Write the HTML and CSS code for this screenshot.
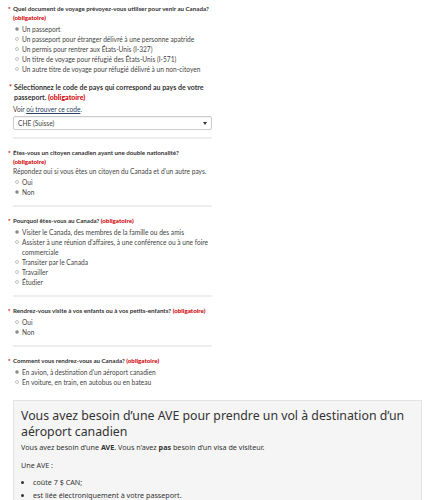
FILE: index.html
```html
<!DOCTYPE html>
<html lang="fr">

<head>
    <meta charset="UTF-8">
    <meta name="viewport" content="width=device-width, initial-scale=1.0">
    <title>Découvrez si vous avez besoin d'un visa</title>
    <link rel="stylesheet" href="styles.css">
</head>

<body>
    <div class="page">
        <form class="wizard">
            <div class="question">
                <p class="label"><span class="req">*</span>Quel document de voyage prévoyez-vous utiliser pour venir au Canada? <strong class="oblig">(obligatoire)</strong></p>
                <ul class="options">
                    <li><span class="radio checked"></span>Un passeport</li>
                    <li><span class="radio"></span>Un passeport pour étranger délivré à une personne apatride</li>
                    <li><span class="radio"></span>Un permis pour rentrer aux États-Unis (I-327)</li>
                    <li><span class="radio"></span>Un titre de voyage pour réfugié des États-Unis (I-571)</li>
                    <li><span class="radio"></span>Un autre titre de voyage pour réfugié délivré à un non-citoyen</li>
                </ul>
            </div>

            <div class="question question-next">
                <p class="label label-big"><span class="req">*</span>Sélectionnez le code de pays qui correspond au pays de votre passeport. <strong class="oblig">(obligatoire)</strong></p>
                <p class="hint">Voir <a href="#">où trouver ce code</a>.</p>
                <div class="select">
                    <span>CHE (Suisse)</span>
                    <span class="caret"></span>
                </div>
            </div>

            <hr class="sep sep-first">

            <div class="question">
                <p class="label"><span class="req">*</span>Êtes-vous un citoyen canadien ayant une double nationalité? <strong class="oblig">(obligatoire)</strong></p>
                <p class="hint">Répondez oui si vous êtes un citoyen du Canada et d'un autre pays.</p>
                <ul class="options">
                    <li><span class="radio"></span>Oui</li>
                    <li><span class="radio checked"></span>Non</li>
                </ul>
            </div>

            <hr class="sep">

            <div class="question">
                <p class="label"><span class="req">*</span>Pourquoi êtes-vous au Canada? <strong class="oblig">(obligatoire)</strong></p>
                <ul class="options">
                    <li><span class="radio checked"></span>Visiter le Canada, des membres de la famille ou des amis</li>
                    <li><span class="radio"></span>Assister à une réunion d'affaires, à une conférence ou à une foire commerciale</li>
                    <li><span class="radio"></span>Transiter par le Canada</li>
                    <li><span class="radio"></span>Travailler</li>
                    <li><span class="radio"></span>Étudier</li>
                </ul>
            </div>

            <hr class="sep">

            <div class="question">
                <p class="label"><span class="req">*</span>Rendrez-vous visite à vos enfants ou à vos petits-enfants? <strong class="oblig">(obligatoire)</strong></p>
                <ul class="options">
                    <li><span class="radio"></span>Oui</li>
                    <li><span class="radio checked"></span>Non</li>
                </ul>
            </div>

            <hr class="sep">

            <div class="question">
                <p class="label"><span class="req">*</span>Comment vous rendrez-vous au Canada? <strong class="oblig">(obligatoire)</strong></p>
                <ul class="options">
                    <li><span class="radio checked"></span>En avion, à destination d'un aéroport canadien</li>
                    <li><span class="radio"></span>En voiture, en train, en autobus ou en bateau</li>
                </ul>
            </div>
        </form>

        <section class="result">
            <h2>Vous avez besoin d’une AVE pour prendre un vol à destination d’un aéroport canadien</h2>
            <p>Vous avez besoin d’une <strong>AVE</strong>. Vous n’avez <strong>pas</strong> besoin d’un visa de visiteur.</p>
            <p>Une AVE :</p>
            <ul>
                <li>coûte 7 $ CAN;</li>
                <li>est liée électroniquement à votre passeport.</li>
            </ul>
        </section>
    </div>
</body>

</html>
```

FILE: styles.css
```css
* {
    margin: 0;
    padding: 0;
    box-sizing: border-box;
}

body {
    font-family: Lato, 'Liberation Sans', sans-serif;
    color: #333;
    background: #fff;
}

.page {
    padding: 4px 13px 0;
}

/* Wizard form */
.wizard {
    width: 199px;
}

.question-next {
    margin-top: 8px;
}

.label {
    position: relative;
    font-size: 6.2px;
    line-height: 9px;
    font-weight: bold;
}

.label .req {
    position: absolute;
    left: -5px;
    color: #d3080c;
}

.oblig {
    color: #d3080c;
}

.label-big {
    font-size: 7px;
    line-height: 10px;
    margin: 0 0 2px 1px;
}

.hint {
    font-size: 6.6px;
    line-height: 10px;
    color: #444;
}

.hint a {
    color: #284162;
}

.options {
    list-style: none;
    margin-top: 2px;
}

.hint + .options {
    margin-top: 1px;
}

.options li {
    display: flex;
    font-size: 6.6px;
    line-height: 10px;
    padding-left: 2px;
    color: #444;
}

.radio {
    flex: none;
    width: 4px;
    height: 4px;
    margin: 3px 3px 0 0;
    border: 1px solid #c4c4c4;
    border-radius: 50%;
}

.radio.checked {
    background: #777;
    border-color: #b4b4b4;
}

.select {
    display: flex;
    justify-content: space-between;
    align-items: center;
    height: 14px;
    margin-top: 2px;
    padding: 0 4px;
    border: 1px solid #ccc;
    border-radius: 2px;
    font-size: 6.6px;
    color: #444;
    box-shadow: inset 0 1px 1px rgba(0, 0, 0, 0.06);
}

.caret {
    width: 0;
    height: 0;
    border-left: 2px solid transparent;
    border-right: 2px solid transparent;
    border-top: 3px solid #333;
}

.sep {
    border: 0;
    height: 2px;
    background: #eee;
    margin: 8px 0 9px;
}

.sep-first {
    margin-top: 7px;
}

/* Result panel */
.result {
    margin-top: 13px;
    background: #f5f5f5;
    border: 1px solid #e3e3e3;
    padding: 7px 7px 10px;
    width: 409px;
    font-family: 'Noto Sans', 'Open Sans', sans-serif;
}

.result h2 {
    font-size: 12.3px;
    line-height: 16px;
    font-weight: normal;
    color: #333;
    margin-bottom: 2px;
}

.result p {
    font-size: 7.2px;
    line-height: 10px;
    margin-bottom: 8px;
}

.result ul {
    padding-left: 12px;
    font-size: 7.2px;
    line-height: 13px;
    margin-top: -2px;
}
```
